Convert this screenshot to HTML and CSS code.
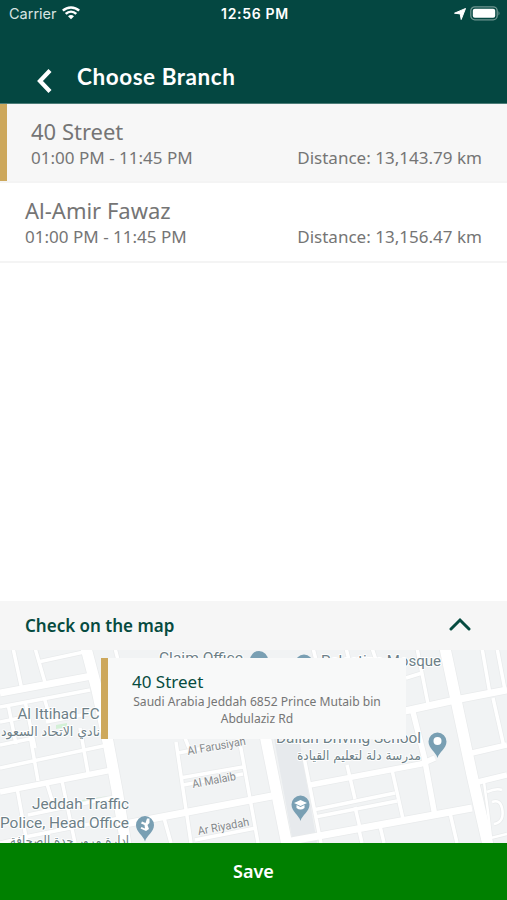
FILE: index.html
```html
<!DOCTYPE html>
<html lang="en">
<head>
<meta charset="utf-8">
<title>Choose Branch</title>
<link rel="stylesheet" href="styles.css">
</head>
<body>
<div class="screen">
  <header class="header">
    <div class="status">
      <div class="carrier">
        <span>Carrier</span>
        <svg width="18" height="14" viewBox="0 0 18 14" fill="none" stroke="#fff" stroke-width="2.500"><path d="M.8 4.700C5.400.3 12.600.3 17.200 4.700"/><path d="M3.700 7.900C6.800 4.900 11.200 4.900 14.300 7.900"/><path d="M6 10.200Q9 7.600 12 10.200L9 13.200Z" fill="#fff" stroke="none"/></svg>
      </div>
      <div class="clock">12:56 PM</div>
      <div class="indicators">
        <svg width="12" height="12" viewBox="0 0 12 12"><path d="M11.500.5L7.200 11.500L6.200 5.900L.5 5.200Z" fill="#fff" stroke="#fff" stroke-width="1" stroke-linejoin="round"/></svg>
        <svg width="31" height="15" viewBox="0 0 31 15"><rect x=".8" y=".8" width="26.400" height="13" rx="4" fill="none" stroke="#6f9691" stroke-width="1.300"/><rect x="2.800" y="2.800" width="22.400" height="9" rx="2" fill="#fff"/><path d="M28.500 5Q30.500 7.300 28.500 9.600Z" fill="#6f9691"/></svg>
      </div>
    </div>
    <div class="nav">
      <svg class="back" width="16" height="24" viewBox="0 0 16 24"><path d="M14 1.500L4 12L14 22.500" fill="none" stroke="#fff" stroke-width="4.200"/></svg>
      <h1>Choose Branch</h1>
    </div>
  </header>

  <main class="branches">
    <section class="branch selected">
      <h2>40 Street</h2>
      <div class="details"><span>01:00 PM - 11:45 PM</span><span class="distance">Distance: 13,143.79 km</span></div>
    </section>
    <section class="branch">
      <h2>Al-Amir Fawaz</h2>
      <div class="details"><span>01:00 PM - 11:45 PM</span><span class="distance">Distance: 13,156.47 km</span></div>
    </section>
  </main>

  <div class="map-toggle">
    <span>Check on the map</span>
    <svg width="22" height="14" viewBox="0 0 22 14"><path d="M2 12L11 3L20 12" fill="none" stroke="#064b40" stroke-width="3" stroke-linecap="round" stroke-linejoin="miter"/></svg>
  </div>

  <div class="map">
    <svg class="tiles" width="507" height="193" viewBox="0 650 507 193">
      <defs>
        <g id="minor" fill="none">
          <path d="M13 648L22 690M35 648L46 686M38 662L84 652M0 707L90 690M25 701L35 748M44 697L50 718M46 722L92 713M0 722L20 718M8 704L16 744"/>
          <path d="M30 735L38 781M80 728L88 773M0 768L108 745M0 745L34 738M17 788L27 843M47 784L52 800M62 781L75 843M28 815L115 797M0 843L30 836L120 818M164 818L171 843"/>
          <path d="M176 742L191 843M178 753L240 741M180 778L243 767M183 785L243 774M238 732L258 843M195 840L256 828M185 738L189 748"/>
          <path d="M304 757L321 843M347 765L355 799M392 770L403 819M313 810L395 793M315 817L397 801M355 807L360 828M359 830L362 843M380 826L384 843M450 813L457 843"/>
          <path d="M482 648L490 694M497 648L505 690M493 698L504 747M417 648L428 704M406 678L422 673M115 648L118 660M313 648L316 660M346 648L349 660M372 648L376 660"/>
        </g>
        <path id="lane" fill="none" d="M484 782Q488 810 491 838L507 834M487 792Q496 788 502 790M492 802Q500 799 502 808Q505 822 494 824"/>
        <path id="medium" fill="none" d="M0 792L112 770M310 785L421 764L435 758M413 712L424 756L435 816M472 753L507 745M478 782L507 775"/>
        <path id="major" fill="none" d="M0 693L97 675M125 824L272 796M286 842L472 808M405 711L460 699L507 690"/>
        <path id="artery" fill="none" d="M86 648L97 690L108 742L117 790L126 845M445 648L456 700L472 775L488 845M264 730L287 845"/>
        <path id="pin" d="M0 16.500C-1.500 10.500-9 7-9 0A9 9 0 0 1 9 0C9 7 1.500 10.500 0 16.500Z" fill="#799fb3"/>
      </defs>
      <rect y="650" width="507" height="193" fill="#f1f3f4"/>
      <path d="M274 738H299L317 843H293Z" fill="#e7eaed"/>
      <path d="M56 725L67 723V727L56 729ZM82 800L108 796L109 800L84 805Z" fill="#d3f0d6"/>
      <g stroke="#e9ebec">
        <use href="#lane" stroke-width="4"/><use href="#minor" stroke-width="5"/><use href="#medium" stroke-width="7"/><use href="#major" stroke-width="8.500"/><use href="#artery" stroke-width="12.500"/>
      </g>
      <g stroke="#fff">
        <use href="#lane" stroke-width="2.500"/><use href="#minor" stroke-width="3.500"/><use href="#medium" stroke-width="5.500"/><use href="#major" stroke-width="7"/><use href="#artery" stroke-width="11"/>
      </g>

      <use href="#pin" x="259" y="660"/><use href="#pin" x="304" y="663.500"/>
      <use href="#pin" x="437.500" y="741.500"/><circle cx="437.500" cy="741" r="4" fill="#fff"/>
      <use href="#pin" x="300.500" y="804.500"/>
      <path d="M294 803L300.500 800L307 803L300.500 806ZM296.500 805V808Q300.500 811 304.500 808V805L300.500 807Z" fill="#fff"/>
      <use href="#pin" x="145" y="825"/>
      <path d="M147 818.500H149.500V823L147.500 825L149 829L146 831L140.500 828.500L141.500 827L145 828.500L144.500 825L141 823.500L142 821.500L145.500 823Z" fill="#fff"/>

      <g class="place">
        <text x="159" y="663" textLength="84" lengthAdjust="spacingAndGlyphs">Claim Office</text>
        <text x="321" y="666" textLength="120" lengthAdjust="spacingAndGlyphs">Palestine Mosque</text>
        <text x="17.500" y="719" textLength="82" lengthAdjust="spacingAndGlyphs">Al Ittihad FC</text>
        <text x="276" y="743" textLength="145" lengthAdjust="spacingAndGlyphs">Dallah Driving School</text>
        <text x="32" y="809" textLength="97" lengthAdjust="spacingAndGlyphs">Jeddah Traffic</text>
        <text x="0" y="828" textLength="129" lengthAdjust="spacingAndGlyphs">Police, Head Office</text>
      </g>
      <g class="place arabic">
        <text x="100" y="736" textLength="99" lengthAdjust="spacingAndGlyphs">نادي الاتحاد السعود</text>
        <text x="421" y="760" textLength="124" lengthAdjust="spacingAndGlyphs">مدرسة دلة لتعليم القيادة</text>
        <text x="129" y="845" textLength="119" lengthAdjust="spacingAndGlyphs">إدارة مرور جدة الصحافة</text>
      </g>
      <g class="street">
        <text transform="translate(188 755) rotate(-10)" textLength="59" lengthAdjust="spacingAndGlyphs">Al Farusiyah</text>
        <text transform="translate(193 788) rotate(-10.500)" textLength="44" lengthAdjust="spacingAndGlyphs">Al Malaib</text>
        <text transform="translate(198.500 835) rotate(-10.500)" textLength="52" lengthAdjust="spacingAndGlyphs">Ar Riyadah</text>
      </g>
    </svg>
    <div class="callout">
      <h3>40 Street</h3>
      <p>Saudi Arabia Jeddah 6852 Prince Mutaib bin Abdulaziz Rd</p>
    </div>
  </div>

  <button class="save">Save</button>
</div>
</body>
</html>
```

FILE: styles.css
```css
* { box-sizing: border-box; margin: 0; }
body { font-family: "Noto Sans", "Open Sans", sans-serif; background: #fff; color: #757575; }
svg { display: block; flex: none; }
.screen { width: 507px; height: 900px; display: flex; flex-direction: column; overflow: hidden; }

.header { height: 104px; flex: none; background: #044741; border-bottom: 1px solid #4d7d78; color: #fff; }
.status { height: 26px; display: grid; grid-template-columns: 1fr auto 1fr; align-items: center; padding: 0 6px 0 9px; font: 14.5px Inter, sans-serif; }
.carrier { display: flex; align-items: center; gap: 5px; color: #d8e4e2; }
.clock { font-weight: 600; font-size: 14px; letter-spacing: .7px; }
.carrier span { padding-top: 1px; }
.indicators { display: flex; align-items: center; justify-content: flex-end; gap: 4px; padding-top: 1px; }
.nav { display: flex; align-items: center; padding: 31px 0 0 36px; height: 70px; gap: 25px; }
.back { margin-top: 8px; }
.nav h1 { font: 700 22.500px/28px Lato, sans-serif; letter-spacing: .55px; }

.branches { flex: 1; }
.branch { height: 80px; padding: 12px 25px 0; border-bottom: 2px solid #f4f4f4; }
.selected { height: 79px; padding: 12px 25px 0 31px; background: linear-gradient(90deg, #cda85c 7px, #f7f7f7 7px); }
.branch h2 { font-size: 22px; font-weight: 400; line-height: 30px; }
.details { display: flex; justify-content: space-between; font-size: 17.050px; line-height: 23px; }

.map-toggle { height: 49px; flex: none; display: flex; align-items: center; justify-content: space-between; padding: 0 36px 0 25px; background: #f6f6f6; color: #064b40; font-size: 17px; font-weight: 600; }
.map-toggle svg { margin-top: -4px; }

.map { position: relative; height: 193px; flex: none; overflow: hidden; }
.place { font: 15.500px Roboto, sans-serif; fill: #6d7f87; stroke: #fff; stroke-width: 2px; paint-order: stroke; stroke-linejoin: round; }
.arabic { font: 13px "DejaVu Sans", sans-serif; direction: rtl; }
.street { font: 11.500px Roboto, sans-serif; fill: #85898c; stroke: #f7f8f8; stroke-width: 2px; paint-order: stroke; }
.callout { position: absolute; left: 101px; top: 8px; width: 305px; height: 81px; padding: 12px 24px 0; border-left: 7px solid #cda85c; background: #f8f9f9; }
.callout h3 { font-size: 17px; line-height: 24px; font-weight: 400; color: #064b40; }
.callout p { font-size: 12.100px; line-height: 16.500px; text-align: center; }

.save { height: 57px; flex: none; border: 0; padding: 0 0 2px; background: #008000; color: #fff; font: 600 18px "Noto Sans", sans-serif; }
```
